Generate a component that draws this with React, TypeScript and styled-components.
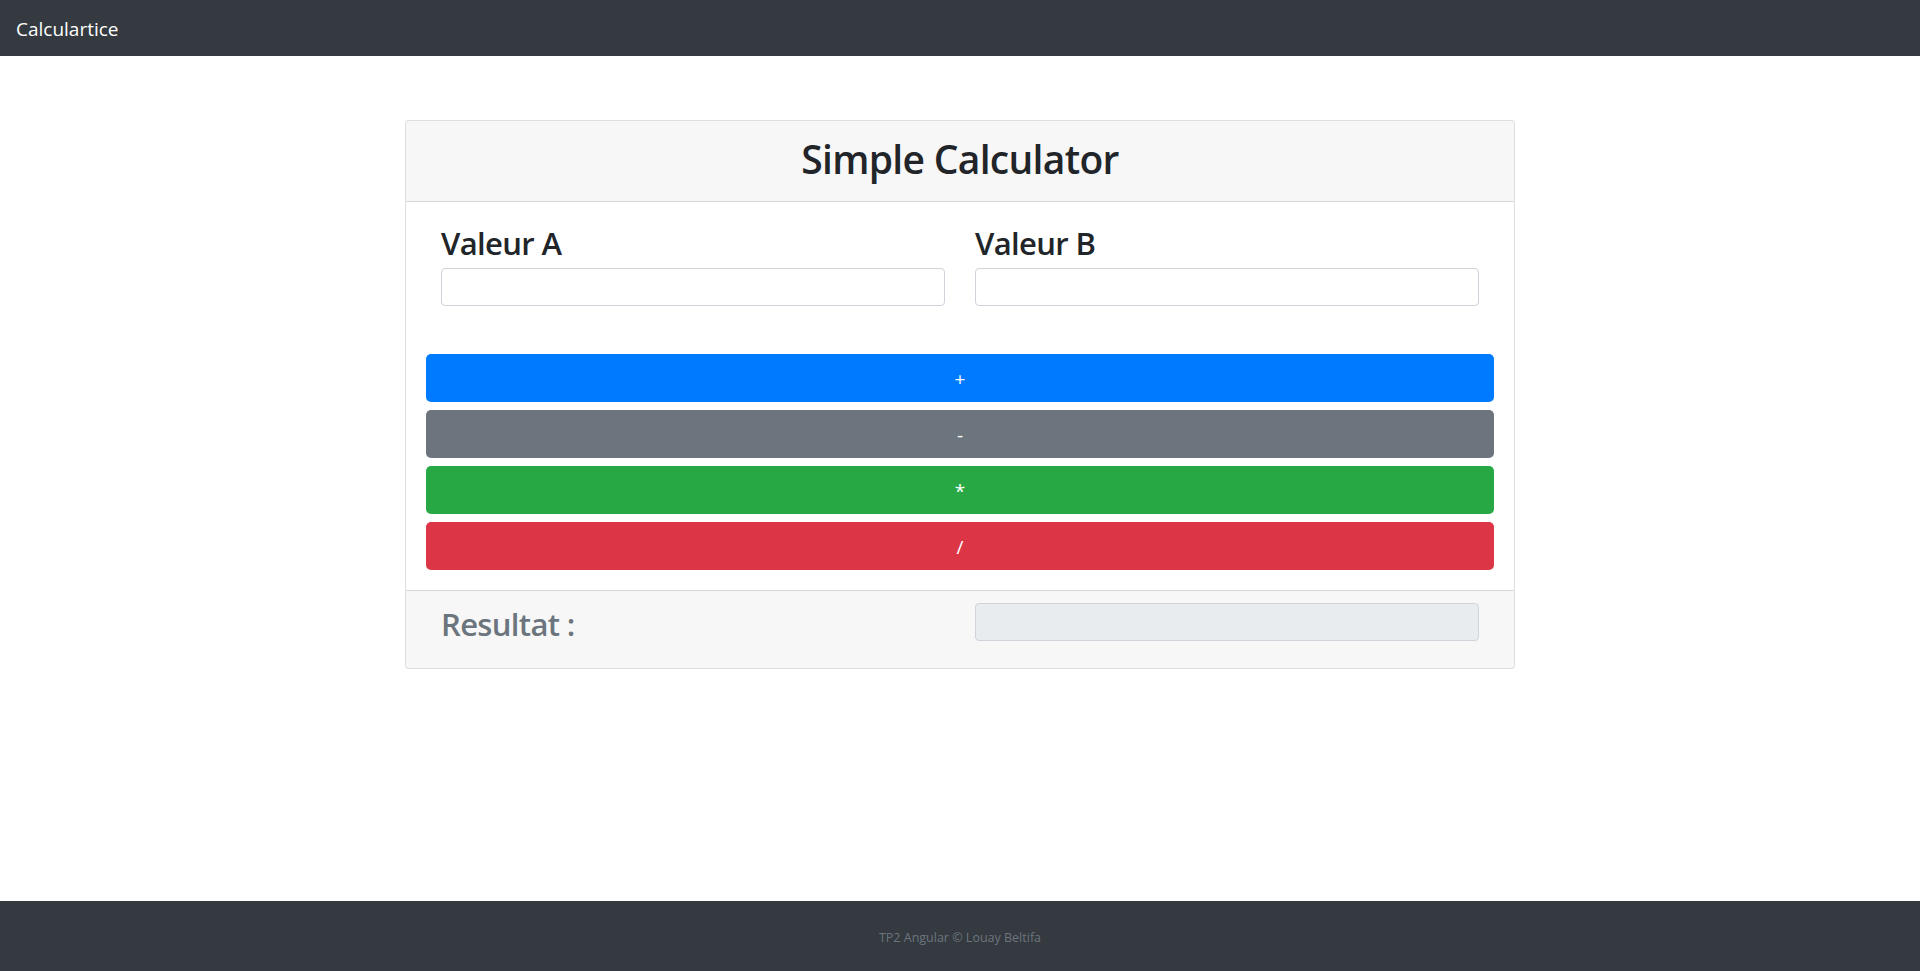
import styled, { createGlobalStyle } from "styled-components";

const GlobalStyle = createGlobalStyle`
  *, *::before, *::after {
    box-sizing: border-box;
  }

  body {
    margin: 0;
    font-family: "Segoe UI", "Open Sans", "Noto Sans", sans-serif;
    font-size: 16px;
    line-height: 1.5;
    color: #212529;
    background: #fff;
  }
`;

const Page = styled.div`
  display: flex;
  flex-direction: column;
  min-height: 100vh;
`;

const NavBar = styled.nav`
  height: 56px;
  background: #343a40;
  display: flex;
  align-items: center;
  padding: 2px 16px 0;
`;

const Brand = styled.a`
  color: #fff;
  font-size: 19px;
  line-height: 1.5;
  text-decoration: none;
`;

const Main = styled.main`
  flex: 1;
  padding-top: 64px;
`;

const Container = styled.div`
  width: 1110px;
  margin: 0 auto;
`;

const Card = styled.section`
  border: 1px solid rgba(0, 0, 0, 0.125);
  border-radius: 4px;
  background: #fff;
  overflow: hidden;
`;

const CardHeader = styled.header`
  background: rgba(0, 0, 0, 0.03);
  border-bottom: 1px solid rgba(0, 0, 0, 0.125);
  padding: 14px 20px 10px;
`;

const Title = styled.h1`
  font-size: 39px;
  font-weight: 600;
  letter-spacing: -0.7px;
  line-height: 48px;
  margin: 0 0 8px;
  text-align: center;
`;

const CardBody = styled.div`
  padding: 20px;
`;

const FieldRow = styled.div`
  display: grid;
  grid-template-columns: 1fr 1fr;
  column-gap: 30px;
  padding: 0 15px;
`;

const FieldLabel = styled.h2<{ $muted?: boolean }>`
  font-size: 31px;
  font-weight: 600;
  letter-spacing: -0.65px;
  line-height: 38px;
  padding-top: 2px;
  margin: 0 0 ${(p) => (p.$muted ? "13px" : "6px")};
  color: ${(p) => (p.$muted ? "#6c757d" : "#212529")};
`;

const TextInput = styled.input`
  display: block;
  width: 100%;
  height: 38px;
  padding: 6px 12px;
  font-size: 16px;
  font-family: inherit;
  color: #495057;
  background: ${(p) => (p.readOnly ? "#e9ecef" : "#fff")};
  border: 1px solid #ced4da;
  border-radius: 4px;
  outline: none;
`;

const ButtonStack = styled.div`
  display: flex;
  flex-direction: column;
  gap: 8px;
  margin-top: 48px;
`;

const variants = {
  primary: "#007bff",
  secondary: "#6c757d",
  success: "#28a745",
  danger: "#dc3545",
};

const OpButton = styled.button<{ $variant: keyof typeof variants }>`
  height: 48px;
  width: 100%;
  border: none;
  border-radius: 5px;
  padding: 3px 16px 0;
  background: ${(p) => variants[p.$variant]};
  color: #fff;
  font-family: inherit;
  font-size: 19px;
  line-height: 1.5;
  cursor: pointer;
`;

const CardFooter = styled.footer`
  background: rgba(0, 0, 0, 0.03);
  border-top: 1px solid rgba(0, 0, 0, 0.125);
  padding: 12px 35px;
  display: grid;
  grid-template-columns: 1fr 1fr;
  column-gap: 30px;
`;

const PageFooter = styled.footer`
  height: 70px;
  background: #343a40;
  display: flex;
  align-items: center;
  justify-content: center;
  padding-top: 4px;
  color: #6c757d;
  font-size: 12.5px;
`;

const operations: { label: string; variant: keyof typeof variants }[] = [
  { label: "+", variant: "primary" },
  { label: "-", variant: "secondary" },
  { label: "*", variant: "success" },
  { label: "/", variant: "danger" },
];

const App = () => {
  return (
    <Page>
      <GlobalStyle />
      <NavBar>
        <Brand href="#">Calculartice</Brand>
      </NavBar>
      <Main>
        <Container>
          <Card>
            <CardHeader>
              <Title>Simple Calculator</Title>
            </CardHeader>
            <CardBody>
              <FieldRow>
                <div>
                  <FieldLabel>Valeur A</FieldLabel>
                  <TextInput type="text" />
                </div>
                <div>
                  <FieldLabel>Valeur B</FieldLabel>
                  <TextInput type="text" />
                </div>
              </FieldRow>
              <ButtonStack>
                {operations.map((op) => (
                  <OpButton key={op.label} $variant={op.variant}>
                    {op.label}
                  </OpButton>
                ))}
              </ButtonStack>
            </CardBody>
            <CardFooter>
              <FieldLabel $muted>Resultat :</FieldLabel>
              <TextInput type="text" readOnly />
            </CardFooter>
          </Card>
        </Container>
      </Main>
      <PageFooter>TP2 Angular © Louay Beltifa</PageFooter>
    </Page>
  );
};

export default App;
